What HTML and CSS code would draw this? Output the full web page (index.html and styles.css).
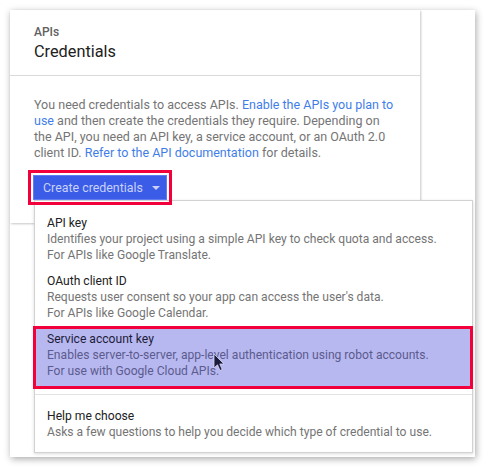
FILE: index.html
```html
<!DOCTYPE html>
<html>
<head>
<meta charset="utf-8">
<link rel="stylesheet" href="styles.css">
</head>
<body>
<div class="window">
  <div class="card">
    <div class="card-head">
      <div class="crumb">APIs</div>
      <div class="title">Credentials</div>
    </div>
    <div class="card-body">
      <p class="intro">You need credentials to access APIs. <a class="link">Enable the APIs you plan to use</a> and then create the credentials they require. Depending on the API, you need an API key, a service account, or an OAuth 2.0 client ID. <a class="link">Refer to the API documentation</a> for details.</p>
      <button class="btn">Create credentials<span class="caret"></span></button>
    </div>
  </div>
  <div class="menu">
    <div class="item first">
      <div class="item-title">API key</div>
      <div class="item-desc">Identifies your project using a simple API key to check quota and access.<br>For APIs like Google Translate.</div>
    </div>
    <div class="item">
      <div class="item-title">OAuth client ID</div>
      <div class="item-desc">Requests user consent so your app can access the user's data.<br>For APIs like Google Calendar.</div>
    </div>
    <div class="item active">
      <div class="item-title">Service account key</div>
      <div class="item-desc">Enables server-to-server, app-level authentication using robot accounts.<br>For use with Google Cloud APIs.</div>
    </div>
    <div class="divider"></div>
    <div class="item help">
      <div class="item-title">Help me choose</div>
      <div class="item-desc">Asks a few questions to help you decide which type of credential to use.</div>
    </div>
  </div>
  <svg class="cursor" width="12" height="19" viewBox="0 0 12 19"><path d="M1 1 L1 15 L4.5 11.8 L7 17.5 L9.2 16.5 L6.8 11 L11 11 Z" fill="#1b1b3a" stroke="#d8d8f8" stroke-width="0.8" stroke-linejoin="round"/></svg>
</div>
</body>
</html>
```

FILE: styles.css
```css
* { box-sizing: border-box; }
html, body { margin: 0; padding: 0; background: #fff; }
body {
  padding: 10px 10px 10px 10px;
  font-family: Roboto, "Liberation Sans", Arial, sans-serif;
}
.window {
  position: relative;
  width: 465px;
  height: 447px;
  background: #fff;
  box-shadow: 1px 2px 7px rgba(0,0,0,0.34);
}
.card {
  width: 410px;
  height: 213px;
  background: #fff;
  box-shadow: 1px 1px 2px rgba(0,0,0,0.22);
}
.card-head {
  padding: 14px 24px 11px;
  border-bottom: 1px solid #dadada;
}
.crumb {
  font-size: 12px;
  line-height: 16px;
  font-weight: 500;
  color: #616161;
}
.title {
  font-size: 16.3px;
  line-height: 24px;
  color: #212121;
}
.card-body {
  padding: 21px 24px 0;
}
.intro {
  margin: 0;
  font-size: 12.5px;
  line-height: 16px;
  color: #757575;
}
.link { color: #3f7ee8; text-decoration: none; }
.btn {
  position: relative;
  z-index: 3;
  margin-top: 14px;
  margin-left: -1px;
  width: 134px;
  height: 25px;
  padding: 0 0 0 9px;
  display: flex;
  align-items: center;
  background: #3a5ce6;
  border: 1px solid #5f7cf0;
  border-radius: 0;
  outline: 3px solid #f2003c;
  outline-offset: 2px;
  color: #c9d1fa;
  font-family: Roboto, "Liberation Sans", Arial, sans-serif;
  font-size: 12.4px;
  text-align: left;
}
.caret {
  margin-left: 9px;
  width: 0; height: 0;
  border-left: 4px solid transparent;
  border-right: 4px solid transparent;
  border-top: 4px solid #c9d1fa;
}
.menu {
  position: absolute;
  z-index: 2;
  left: 24px;
  top: 190px;
  width: 439px;
  height: 253px;
  background: #fff;
  border: 1px solid #d2d2d2;
  box-shadow: 0 1px 3px rgba(0,0,0,0.15);
  padding-top: 9px;
}
.item {
  padding: 5px 12px 5px;
}
.item-title {
  font-size: 12.1px;
  line-height: 16px;
  color: #212121;
}
.item-desc {
  font-size: 12.1px;
  line-height: 16px;
  color: #757575;
}
.item.active {
  margin: 0 -1px 0 -2px;
  padding: 2px 12px 7px 11px;
  background: #b8b8f0;
  border: 3px solid #f2003c;
}
.item.active .item-title { color: #1c1c3a; }
.item.active .item-desc { color: #5b5b8e; }
.divider {
  margin-top: 5px;
  height: 1px;
  background: #e2e2e2;
}
.item.help {
  padding-top: 13px;
}
.cursor {
  position: absolute;
  z-index: 5;
  left: 203px;
  top: 343px;
}
```
